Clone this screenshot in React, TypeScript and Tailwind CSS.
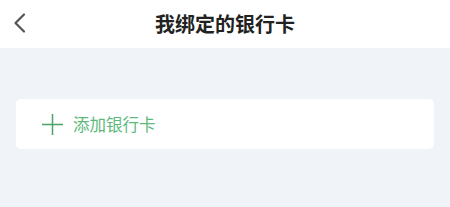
import React from 'react';

const FONT = { fontFamily: '"Noto Sans CJK SC", "Noto Sans", sans-serif' };

export default function App() {
  return (
    <div className="w-[450px] h-[207px] flex flex-col bg-[#f0f3f7]" style={FONT}>
      {/* Header */}
      <div className="h-12 bg-white flex items-center relative">
        <button className="absolute left-3 top-[13px] w-4 h-5 flex items-center justify-center">
          <svg width="16" height="22" viewBox="0 0 16 22" fill="none">
            <path d="M12 2.5 L3.5 11 L12 19.5" stroke="#555" strokeWidth="2.2" strokeLinecap="round" strokeLinejoin="round" />
          </svg>
        </button>
        <h1 className="flex-1 text-center text-[20px] font-bold text-[#222] leading-none">我绑定的银行卡</h1>
      </div>

      {/* Content */}
      <div className="px-4 pt-[51px]">
        <div className="h-[50px] bg-white rounded-[5px] flex items-center pl-[26px]">
          <svg width="21" height="21" viewBox="0 0 21 21" fill="none">
            <path d="M10.5 0 V21 M0 10.5 H21" stroke="#4aa46a" strokeWidth="1.5" />
          </svg>
          <span className="ml-[10px] text-[16.5px] text-[#5cb97b] leading-none">添加银行卡</span>
        </div>
      </div>
    </div>
  );
}
